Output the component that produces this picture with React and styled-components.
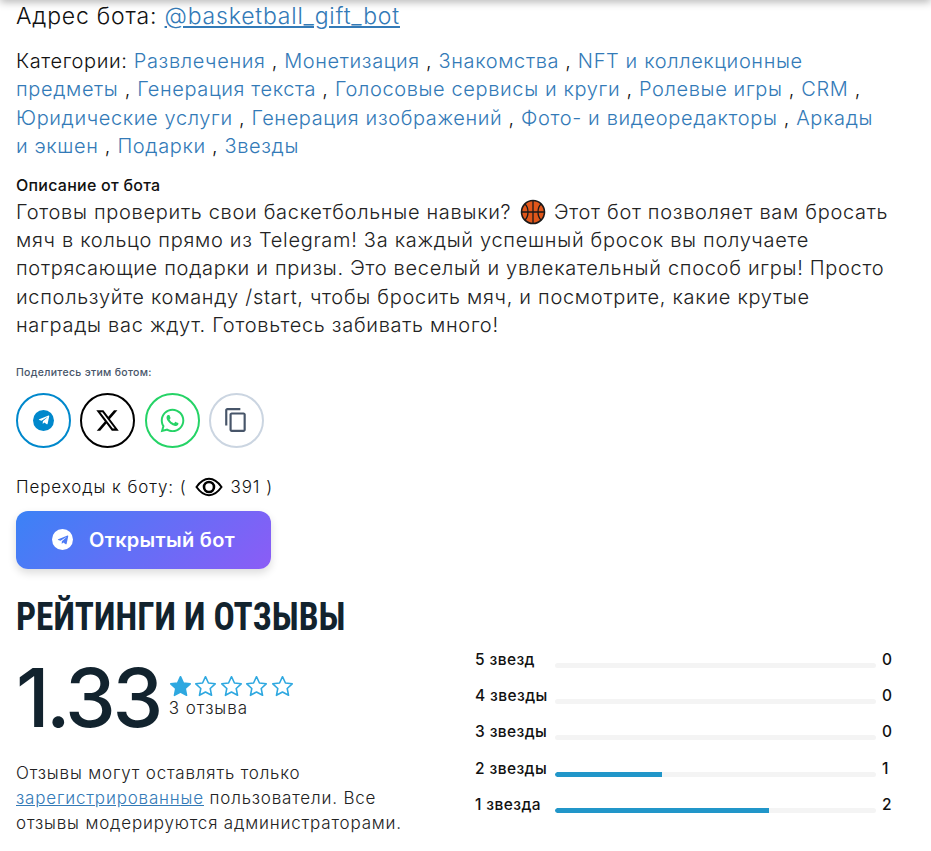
import React from 'react';
import styled, {createGlobalStyle} from 'styled-components';
import {FaTelegramPlane, FaWhatsapp} from 'react-icons/fa';
import {FaXTwitter} from 'react-icons/fa6';
import {MdOutlineContentCopy} from 'react-icons/md';

const Global = createGlobalStyle`
  html, body {
    margin: 0;
    padding: 0;
    background: #fff;
    overflow: hidden;
  }
  body {
    font-family: Inter, "Noto Sans", sans-serif;
    color: #12232e;
  }
`

const Page = styled.div`
  width: 931px;
  height: 851px;
  position: relative;
  overflow: hidden;
  box-sizing: border-box;
  padding: 1px 16px 0;
`
const TopShadow = styled.div`
  position: absolute;
  top: -10px;
  left: 0;
  right: 0;
  height: 10px;
  box-shadow: 0 2px 8px rgba(0, 0, 0, .3);
`
const Address = styled.div`
  font-size: 23px;
  line-height: 30px;
  letter-spacing: .8px;
  font-weight: 350;
  color: #111;
`
const Link = styled.a`
  color: #337ab7;
  text-decoration: ${p => p.$under ? 'underline' : 'none'};
`
const Categories = styled.div`
  margin-top: 16px;
  font-size: 20px;
  line-height: 28.4px;
  letter-spacing: .62px;
  font-weight: 350;
  width: 870px;
  color: #111;
`
const DescTitle = styled.div`
  margin-top: 11px;
  font-size: 16px;
  line-height: 26px;
  font-weight: 500;
  letter-spacing: .25px;
  color: #111;
`
const DescText = styled.div`
  font-size: 20px;
  line-height: 28.4px;
  letter-spacing: .7px;
  font-weight: 350;
  color: #222;
  width: 880px;
`
const Ball = styled.svg`
  width: 26px;
  height: 26px;
  vertical-align: -6px;
  margin: 0 2px;
`
const ShareLabel = styled.div`
  margin-top: 26px;
  font-size: 10.5px;
  line-height: 14px;
  font-weight: 500;
  letter-spacing: .3px;
  color: #475569;
`
const ShareRow = styled.div`
  display: flex;
  gap: 9.3px;
  margin-top: 13px;
`
const ShareBtn = styled.div`
  width: 55px;
  height: 55px;
  box-sizing: border-box;
  border-radius: 50%;
  border: 2px solid ${p => p.$color};
  color: ${p => p.$icon || p.$color};
  display: flex;
  align-items: center;
  justify-content: center;
`
const TgDot = styled.span`
  width: 21px;
  height: 21px;
  border-radius: 50%;
  background: ${p => p.$bg};
  color: ${p => p.$fg};
  display: flex;
  align-items: center;
  justify-content: center;
`
const Visits = styled.div`
  margin-top: 27px;
  font-size: 17px;
  line-height: 24px;
  letter-spacing: .9px;
  font-weight: 350;
  display: flex;
  align-items: center;
  color: #111;
  svg {
    margin: 0 8px;
  }
`
const OpenBtn = styled.div`
  margin-top: 12px;
  width: 255px;
  height: 58px;
  border-radius: 12px;
  background: linear-gradient(135deg, #3b82f6, #8b5cf6);
  box-shadow: 0 4px 8px rgba(0, 0, 0, .14);
  color: #fff;
  font-size: 20px;
  font-weight: 600;
  letter-spacing: .3px;
  display: flex;
  align-items: center;
  justify-content: center;
  gap: 16px;
`
const Heading = styled.h2`
  margin: 26px 0 0;
  font-family: "Roboto Condensed", Roboto, sans-serif;
  font-size: 38px;
  line-height: 44px;
  font-weight: 700;
  color: #12232e;
  transform: scaleX(.93);
  transform-origin: left center;
`
const Columns = styled.div`
  display: grid;
  grid-template-columns: 459px 418px;
  margin-top: 10px;
`
const ScoreRow = styled.div`
  display: flex;
  align-items: center;
  gap: 9px;
  height: 96px;
`
const Score = styled.div`
  font-size: 81px;
  line-height: 96px;
  letter-spacing: -3.5px;
  font-weight: 500;
  color: #12232e;
  margin-top: 2px;
`
const ScoreSide = styled.div`
  display: flex;
  flex-direction: column;
`
const Stars = styled.div`
  display: flex;
  gap: 2.5px;
`
const ReviewCount = styled.div`
  font-size: 17px;
  line-height: 20px;
  letter-spacing: 1px;
  font-weight: 350;
  color: #222;
  margin-top: 1px;
`
const Note = styled.div`
  margin-top: 16px;
  font-size: 17px;
  line-height: 25px;
  letter-spacing: .82px;
  font-weight: 350;
  color: #222;
`
const Bars = styled.div`
  display: flex;
  flex-direction: column;
  gap: 12.4px;
  padding-top: 1px;
`
const BarRow = styled.div`
  display: flex;
  align-items: flex-start;
  height: 24px;
  font-size: 15.5px;
  line-height: 20px;
  font-weight: 500;
  letter-spacing: .4px;
  color: #111;
`
const BarLabel = styled.div`
  width: 80px;
  flex: none;
`
const Track = styled.div`
  width: 321px;
  flex: none;
  height: 5px;
  margin-top: 13px;
  border-radius: 3px;
  background: #f4f4f4;
  overflow: hidden;
`
const Fill = styled.div`
  height: 100%;
  background: #2196c9;
  border-radius: 3px 0 0 3px;
`
const BarCount = styled.div`
  margin-left: 6px;
`

const starPath = 'M11 1.6l2.8 6 6.5.8-4.8 4.5 1.3 6.5L11 16.2l-5.8 3.2 1.3-6.5L1.7 8.4l6.5-.8z';

const Star = ({filled}) => (
  <svg width="23" height="22" viewBox="0 0 22 21">
    <path d={starPath} fill={filled ? '#2ea8e0' : '#fff'} stroke="#2ea8e0" strokeWidth="1.5" strokeLinejoin="round"/>
  </svg>
);

const BallIcon = () => (
  <Ball viewBox="0 0 26 26">
    <circle cx="13" cy="13" r="11.5" fill="#e0561a" stroke="#1a1a1a" strokeWidth="1.6"/>
    <path d="M13 1.5v23M1.5 13h23M5 5c4 4 4 12 0 16M21 5c-4 4-4 12 0 16" fill="none" stroke="#1a1a1a" strokeWidth="1.3"/>
  </Ball>
);

const EyeIcon = () => (
  <svg width="28" height="20" viewBox="0 0 28 20" fill="none" stroke="#000">
    <path d="M1.5 10C6 3.6 10 1.8 14 1.8S22 3.6 26.5 10C22 16.4 18 18.2 14 18.2S6 16.4 1.5 10z" strokeWidth="2"/>
    <circle cx="14" cy="10" r="5" strokeWidth="2.6"/>
  </svg>
);

const categories = [
  'Развлечения', 'Монетизация', 'Знакомства', 'NFT и коллекционные предметы',
  'Генерация текста', 'Голосовые сервисы и круги', 'Ролевые игры', 'CRM',
  'Юридические услуги', 'Генерация изображений', 'Фото- и видеоредакторы',
  'Аркады и экшен', 'Подарки', 'Звезды',
];

const ratings = [
  {label: '5 звезд', count: 0},
  {label: '4 звезды', count: 0},
  {label: '3 звезды', count: 0},
  {label: '2 звезды', count: 1},
  {label: '1 звезда', count: 2},
];

export default function App() {
  return (
    <Page>
      <Global/>
      <TopShadow/>
      <Address>Адрес бота: <Link $under href="#">@basketball_gift_bot</Link></Address>
      <Categories>
        Категории:{' '}
        {categories.map((c, i) => (
          <React.Fragment key={c}>
            <Link href="#">{c}</Link>{i < categories.length - 1 ? <span> , </span> : ''}
          </React.Fragment>
        ))}
      </Categories>
      <DescTitle>Описание от бота</DescTitle>
      <DescText>
        Готовы проверить свои баскетбольные навыки? <BallIcon/> Этот бот позволяет вам бросать мяч в кольцо прямо из Telegram! За каждый успешный бросок вы получаете потрясающие подарки и призы. Это веселый и увлекательный способ игры! Просто используйте команду /start, чтобы бросить мяч, и посмотрите, какие крутые награды вас ждут. Готовьтесь забивать много!
      </DescText>
      <ShareLabel>Поделитесь этим ботом:</ShareLabel>
      <ShareRow>
        <ShareBtn $color="#0088cc"><TgDot $bg="#0088cc" $fg="#fff"><FaTelegramPlane size={12}/></TgDot></ShareBtn>
        <ShareBtn $color="#000"><FaXTwitter size={25}/></ShareBtn>
        <ShareBtn $color="#25d366"><FaWhatsapp size={27}/></ShareBtn>
        <ShareBtn $color="#cbd5e1" $icon="#475569"><MdOutlineContentCopy size={26}/></ShareBtn>
      </ShareRow>
      <Visits>Переходы к боту: ( <EyeIcon/> 391 )</Visits>
      <OpenBtn>
        <TgDot $bg="#fff" $fg="#4f7cf6"><FaTelegramPlane size={12}/></TgDot>
        Открытый бот
      </OpenBtn>
      <Heading>РЕЙТИНГИ И ОТЗЫВЫ</Heading>
      <Columns>
        <div>
          <ScoreRow>
            <Score>1.33</Score>
            <ScoreSide>
              <Stars>
                {[1, 2, 3, 4, 5].map(n => <Star key={n} filled={n === 1}/>)}
              </Stars>
              <ReviewCount>3 отзыва</ReviewCount>
            </ScoreSide>
          </ScoreRow>
          <Note>
            Отзывы могут оставлять только<br/>
            <Link $under href="#">зарегистрированные</Link> пользователи. Все<br/>
            отзывы модерируются администраторами.
          </Note>
        </div>
        <Bars>
          {ratings.map(r => (
            <BarRow key={r.label}>
              <BarLabel>{r.label}</BarLabel>
              <Track><Fill style={{width: `${r.count / 3 * 100}%`}}/></Track>
              <BarCount>{r.count}</BarCount>
            </BarRow>
          ))}
        </Bars>
      </Columns>
    </Page>
  );
}
